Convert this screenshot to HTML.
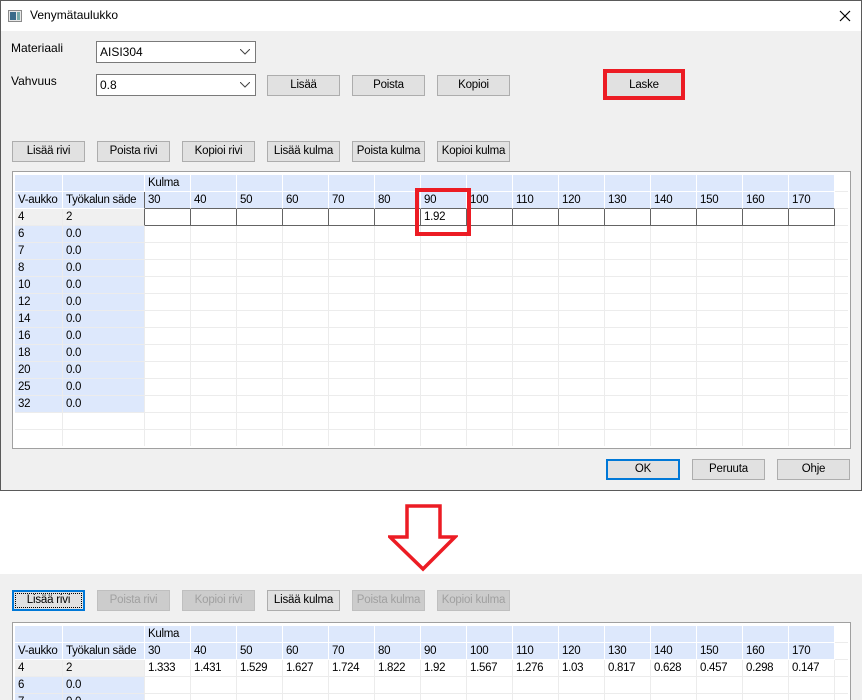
<!DOCTYPE html>
<html><head><meta charset="utf-8"><style>
*{box-sizing:border-box;margin:0;padding:0}
html,body{width:862px;height:700px;overflow:hidden}
body{background:#fff;font-family:"Liberation Sans",sans-serif;font-size:12px;color:#000;position:relative}
.a{position:absolute}
.win{left:0;top:0;width:862px;height:491px;border:1px solid #5a5a5a;background:#f0f0f0}
.title{left:1px;top:1px;width:860px;height:30px;background:#fff}
.btn{position:absolute;height:21px;background:#e1e1e1;border:1px solid #adadad;text-align:center;line-height:19px;font-size:11.5px;letter-spacing:-0.2px}
.dis{background:#cccccc;border-color:#bfbfbf;color:#a0a0a0}
.combo{position:absolute;background:#fff;border:1px solid #7a7a7a;height:22px;line-height:20px;padding-left:3px}
.combo svg{position:absolute;right:5px;top:7px}
.grid{position:absolute;background:#fff;border:1px solid #a0a0a0;overflow:hidden}
.gin{position:absolute;left:2px;top:3px;overflow:hidden;background:#fff}
.r{display:flex;height:17px}
.r div{flex:none;width:46px;height:17px;border-right:1px solid #ececec;border-bottom:1px solid #ececec;padding-left:3px;line-height:17px;white-space:nowrap;overflow:hidden;font-size:11.5px;letter-spacing:-0.3px}
.r div:nth-child(1){width:48px}
.r div:nth-child(2){width:82px}
.r div:last-child{width:30px}
.h div{background:#dde8fc;border-color:#fff}
.r .b{background:#dde8fc}
.r .g{background:#f0f0f0}
.h div:last-child{background:#fff;border-color:#ececec}
.dk div.d{border-right-color:#646464;border-bottom-color:#646464;background:#fff}
.h2 div.d{border-bottom-color:#646464}
.r div.l{border-right-color:#646464}
</style></head><body>
<div class="a win"></div>
<div class="a title"></div>
<div class="a" style="left:8px;top:10px;width:14px;height:12px;border:1px solid #8a8a8a;background:#e8e8e8"><div class="a" style="left:1px;top:1px;width:6px;height:8px;background:#3a6b8a"></div><div class="a" style="left:8px;top:1px;width:3px;height:8px;background:#7aa"></div></div>
<div class="a" style="left:30px;top:8px;font-size:12px">Venymätaulukko</div>
<svg class="a" style="left:839px;top:10px" width="12" height="12"><path d="M1 1L11 11M11 1L1 11" stroke="#000" stroke-width="1.2"/></svg>

<div class="a" style="left:11px;top:41px">Materiaali</div>
<div class="combo" style="left:96px;top:41px;width:160px">AISI304<svg width="10" height="6"><path d="M0 0L5 5L10 0" fill="none" stroke="#444"/></svg></div>
<div class="a" style="left:11px;top:74px">Vahvuus</div>
<div class="combo" style="left:96px;top:74px;width:160px">0.8<svg width="10" height="6"><path d="M0 0L5 5L10 0" fill="none" stroke="#444"/></svg></div>
<div class="btn" style="left:267px;top:75px;width:73px">Lisää</div>
<div class="btn" style="left:352px;top:75px;width:73px">Poista</div>
<div class="btn" style="left:437px;top:75px;width:73px">Kopioi</div>
<div class="btn" style="left:606px;top:72px;width:76px;height:26px;line-height:24px">Laske</div>
<div class="a" style="left:603px;top:69px;width:82px;height:31px;border:4px solid #ec1c24"></div>

<div class="btn" style="left:12px;top:141px;width:73px">Lisää rivi</div>
<div class="btn" style="left:97px;top:141px;width:73px">Poista rivi</div>
<div class="btn" style="left:182px;top:141px;width:73px">Kopioi rivi</div>
<div class="btn" style="left:267px;top:141px;width:73px">Lisää kulma</div>
<div class="btn" style="left:352px;top:141px;width:73px">Poista kulma</div>
<div class="btn" style="left:437px;top:141px;width:73px">Kopioi kulma</div>

<div class="grid" style="left:12px;top:171px;width:839px;height:278px">
<div class="gin" style="width:833px;height:271px">
<div class="r h"><div></div><div></div><div>Kulma</div><div></div><div></div><div></div><div></div><div></div><div></div><div></div><div></div><div></div><div></div><div></div><div></div><div></div><div></div><div></div></div>
<div class="r h h2"><div>V-aukko</div><div class="l">Työkalun säde</div><div class="d">30</div><div class="d">40</div><div class="d">50</div><div class="d">60</div><div class="d">70</div><div class="d">80</div><div class="d">90</div><div class="d">100</div><div class="d">110</div><div class="d">120</div><div class="d">130</div><div class="d">140</div><div class="d">150</div><div class="d">160</div><div class="d">170</div><div></div></div>
<div class="r dk"><div class="g">4</div><div class="g l">2</div><div class="d"></div><div class="d"></div><div class="d"></div><div class="d"></div><div class="d"></div><div class="d"></div><div class="d">1.92</div><div class="d"></div><div class="d"></div><div class="d"></div><div class="d"></div><div class="d"></div><div class="d"></div><div class="d"></div><div class="d"></div><div></div></div>
<div class="r"><div class="b">6</div><div class="b">0.0</div><div></div><div></div><div></div><div></div><div></div><div></div><div></div><div></div><div></div><div></div><div></div><div></div><div></div><div></div><div></div><div></div></div>
<div class="r"><div class="b">7</div><div class="b">0.0</div><div></div><div></div><div></div><div></div><div></div><div></div><div></div><div></div><div></div><div></div><div></div><div></div><div></div><div></div><div></div><div></div></div>
<div class="r"><div class="b">8</div><div class="b">0.0</div><div></div><div></div><div></div><div></div><div></div><div></div><div></div><div></div><div></div><div></div><div></div><div></div><div></div><div></div><div></div><div></div></div>
<div class="r"><div class="b">10</div><div class="b">0.0</div><div></div><div></div><div></div><div></div><div></div><div></div><div></div><div></div><div></div><div></div><div></div><div></div><div></div><div></div><div></div><div></div></div>
<div class="r"><div class="b">12</div><div class="b">0.0</div><div></div><div></div><div></div><div></div><div></div><div></div><div></div><div></div><div></div><div></div><div></div><div></div><div></div><div></div><div></div><div></div></div>
<div class="r"><div class="b">14</div><div class="b">0.0</div><div></div><div></div><div></div><div></div><div></div><div></div><div></div><div></div><div></div><div></div><div></div><div></div><div></div><div></div><div></div><div></div></div>
<div class="r"><div class="b">16</div><div class="b">0.0</div><div></div><div></div><div></div><div></div><div></div><div></div><div></div><div></div><div></div><div></div><div></div><div></div><div></div><div></div><div></div><div></div></div>
<div class="r"><div class="b">18</div><div class="b">0.0</div><div></div><div></div><div></div><div></div><div></div><div></div><div></div><div></div><div></div><div></div><div></div><div></div><div></div><div></div><div></div><div></div></div>
<div class="r"><div class="b">20</div><div class="b">0.0</div><div></div><div></div><div></div><div></div><div></div><div></div><div></div><div></div><div></div><div></div><div></div><div></div><div></div><div></div><div></div><div></div></div>
<div class="r"><div class="b">25</div><div class="b">0.0</div><div></div><div></div><div></div><div></div><div></div><div></div><div></div><div></div><div></div><div></div><div></div><div></div><div></div><div></div><div></div><div></div></div>
<div class="r"><div class="b">32</div><div class="b">0.0</div><div></div><div></div><div></div><div></div><div></div><div></div><div></div><div></div><div></div><div></div><div></div><div></div><div></div><div></div><div></div><div></div></div>
<div class="r"><div></div><div></div><div></div><div></div><div></div><div></div><div></div><div></div><div></div><div></div><div></div><div></div><div></div><div></div><div></div><div></div><div></div><div></div></div>
<div class="r"><div></div><div></div><div></div><div></div><div></div><div></div><div></div><div></div><div></div><div></div><div></div><div></div><div></div><div></div><div></div><div></div><div></div><div></div></div>
</div></div>
<div class="a" style="left:415px;top:188px;width:56px;height:48px;border:4px solid #ec1c24"></div>

<div class="btn" style="left:606px;top:459px;width:74px;border:2px solid #0078d7;line-height:17px">OK</div>
<div class="btn" style="left:692px;top:459px;width:73px">Peruuta</div>
<div class="btn" style="left:777px;top:459px;width:73px">Ohje</div>

<svg class="a" style="left:388px;top:504px" width="70" height="68"><path d="M19 2H52V33H67L35 65L2 33H19Z" fill="none" stroke="#ec1c24" stroke-width="3.5"/></svg>

<div class="a" style="left:0;top:574px;width:862px;height:126px;background:#f0f0f0"></div>
<div class="btn" style="left:12px;top:590px;width:73px;border:2px solid #0078d7;line-height:17px"><div class="a" style="left:1px;top:1px;right:1px;bottom:1px;border:1px dotted #000"></div>Lisää rivi</div>
<div class="btn dis" style="left:97px;top:590px;width:73px">Poista rivi</div>
<div class="btn dis" style="left:182px;top:590px;width:73px">Kopioi rivi</div>
<div class="btn" style="left:267px;top:590px;width:73px">Lisää kulma</div>
<div class="btn dis" style="left:352px;top:590px;width:73px">Poista kulma</div>
<div class="btn dis" style="left:437px;top:590px;width:73px">Kopioi kulma</div>
<div class="grid" style="left:12px;top:622px;width:839px;height:90px">
<div class="gin" style="width:833px;height:90px">
<div class="r h"><div></div><div></div><div>Kulma</div><div></div><div></div><div></div><div></div><div></div><div></div><div></div><div></div><div></div><div></div><div></div><div></div><div></div><div></div><div></div></div>
<div class="r h"><div>V-aukko</div><div>Työkalun säde</div><div>30</div><div>40</div><div>50</div><div>60</div><div>70</div><div>80</div><div>90</div><div>100</div><div>110</div><div>120</div><div>130</div><div>140</div><div>150</div><div>160</div><div>170</div><div></div></div>
<div class="r"><div class="g">4</div><div class="g">2</div><div>1.333</div><div>1.431</div><div>1.529</div><div>1.627</div><div>1.724</div><div>1.822</div><div>1.92</div><div>1.567</div><div>1.276</div><div>1.03</div><div>0.817</div><div>0.628</div><div>0.457</div><div>0.298</div><div>0.147</div><div></div></div>
<div class="r"><div class="b">6</div><div class="b">0.0</div><div></div><div></div><div></div><div></div><div></div><div></div><div></div><div></div><div></div><div></div><div></div><div></div><div></div><div></div><div></div><div></div></div>
<div class="r"><div class="b">7</div><div class="b">0.0</div><div></div><div></div><div></div><div></div><div></div><div></div><div></div><div></div><div></div><div></div><div></div><div></div><div></div><div></div><div></div><div></div></div>
</div></div>
</body></html>
